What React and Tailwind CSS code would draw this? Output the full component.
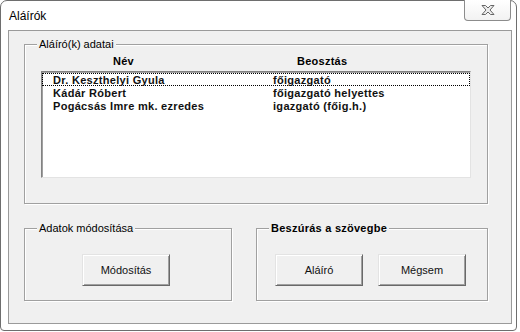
const rows = [
  ["Dr. Keszthelyi Gyula", "főigazgató"],
  ["Kádár Róbert", "főigazgató helyettes"],
  ["Pogácsás Imre mk. ezredes", "igazgató (főig.h.)"],
];

function Btn({ children }) {
  return (
    <button className="w-[88px] h-[32px] bg-[#f0f0f0] border border-t-[#e3e3e3] border-l-[#e3e3e3] border-b-[#696969] border-r-[#696969] shadow-[inset_1px_1px_0_#fff,inset_-1px_-1px_0_#a0a0a0] text-[11px] text-[#111]">
      {children}
    </button>
  );
}

function Group({ label, bold, className, children }) {
  return (
    <div className={`relative border border-[#a0a0a0] shadow-[inset_1px_1px_0_#fff,1px_1px_0_#fff] ${className}`}>
      <span className={`absolute -top-[7px] left-[12px] px-[2px] bg-[#f0f0f0] text-[11px] leading-[13px] ${bold ? "font-bold tracking-[0.25px]" : ""}`}>
        {label}
      </span>
      {children}
    </div>
  );
}

export default function App() {
  return (
    <div className="w-[520px] h-[332px] bg-white font-['Liberation_Sans',Arial,sans-serif] text-black">
      <div className="relative w-[517px] h-[331px] bg-white border border-[#6e6e6e] rounded-t-[7px] rounded-b-[4px]">
        {/* title bar */}
        <div className="h-[29px] flex items-center pl-[8px] text-[12px]">Aláírók</div>
        <div className="absolute -top-[1px] right-[5px] w-[47px] h-[21px] border border-t-0 border-[#8c8c8c] rounded-b-[4px] bg-gradient-to-b from-white to-[#f2f2f2] flex items-center justify-center">
          <svg width="14" height="10" viewBox="0 0 14 10">
            <polygon
              points="1,0.5 4.5,0.5 7,3 9.5,0.5 13,0.5 9,5 13,9.5 9.5,9.5 7,7 4.5,9.5 1,9.5 5,5"
              fill="#ececec"
              stroke="#666"
              strokeWidth="1"
              strokeLinejoin="round"
            />
          </svg>
        </div>

        {/* client area */}
        <div className="ml-[7px] w-[504px] h-[294px] border border-[#9a9a9a] bg-[#f0f0f0] pt-[13px] pl-[15px]">
          <Group label="Aláíró(k) adatai" className="w-[464px] h-[160px]">
            <div className="flex mt-[10px] h-[13px] leading-[13px] text-[11px] font-bold tracking-[0.25px]">
              <span className="ml-[88px] w-[184px]">Név</span>
              <span>Beosztás</span>
            </div>
            <div className="ml-[16px] mt-[3px] w-[430px] h-[107px] bg-white border border-t-[#828282] border-l-[#828282] border-b-[#e3e3e3] border-r-[#e3e3e3] shadow-[inset_1px_1px_0_#a0a0a0]">
              <div className="pt-[1px] pl-[1px] text-[11px] font-bold tracking-[0.3px] text-[#111]">
                {rows.map(([name, role], i) => (
                  <div
                    key={i}
                    className={`flex h-[13px] leading-[12px] pl-[10px] -ml-[1px] border ${i === 0 ? "border-dotted border-black" : "border-transparent"}`}
                  >
                    <span className="w-[220px]">{name}</span>
                    <span>{role}</span>
                  </div>
                ))}
              </div>
            </div>
          </Group>

          <div className="flex gap-[24px] mt-[24px]">
            <Group label="Adatok módosítása" className="w-[208px] h-[73px]">
              <div className="ml-[57px] mt-[25px]">
                <Btn>Módosítás</Btn>
              </div>
            </Group>
            <Group label="Beszúrás a szövegbe" bold className="w-[232px] h-[73px]">
              <div className="flex gap-[15px] ml-[18px] mt-[25px]">
                <Btn>Aláíró</Btn>
                <Btn>Mégsem</Btn>
              </div>
            </Group>
          </div>
        </div>
      </div>
    </div>
  );
}
